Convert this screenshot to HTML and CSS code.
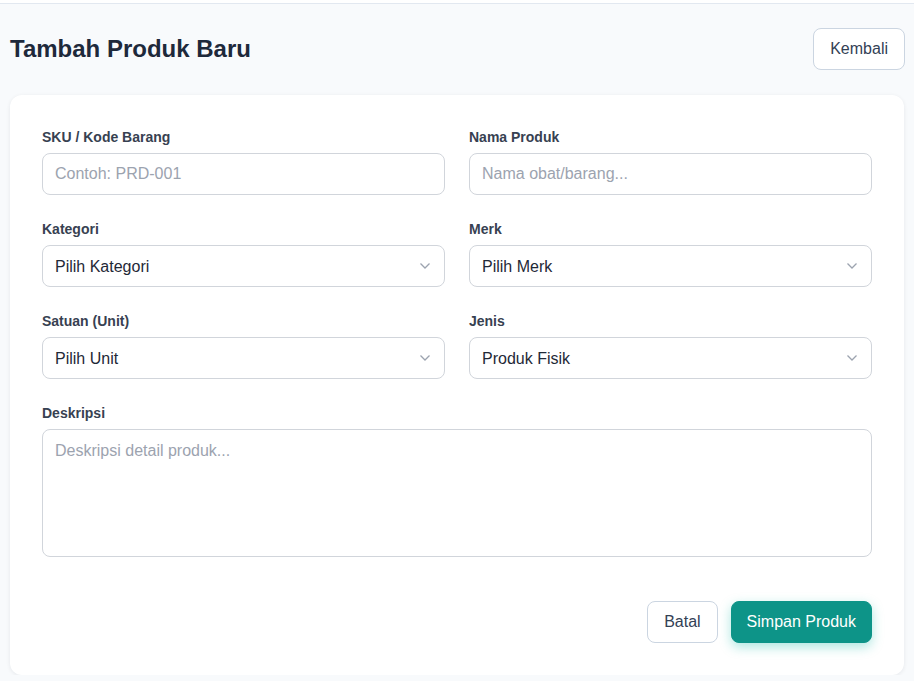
FILE: index.html
```html
<!doctype html>
<html lang="id">
  <head>
    <meta charset="UTF-8" />
    <meta name="viewport" content="width=device-width, initial-scale=1.0" />
    <title>Tambah Produk Baru</title>
    <link rel="stylesheet" href="styles.css">
  </head>
  <body>
    <div class="topbar"></div>

    <main class="page">
      <div class="page-header">
        <h1 class="page-title">Tambah Produk Baru</h1>
        <button type="button" class="btn btn-outline btn-back">Kembali</button>
      </div>

      <form class="card" onsubmit="return false;">
        <div class="form-grid">
          <div class="field">
            <label for="sku">SKU / Kode Barang</label>
            <input type="text" id="sku" class="control" placeholder="Contoh: PRD-001" />
          </div>
          <div class="field">
            <label for="nama">Nama Produk</label>
            <input type="text" id="nama" class="control" placeholder="Nama obat/barang..." />
          </div>

          <div class="field">
            <label for="kategori">Kategori</label>
            <div class="select-wrap">
              <select id="kategori" class="control">
                <option>Pilih Kategori</option>
              </select>
              <svg class="chevron" viewBox="0 0 12 8" width="12" height="8"><path d="M1.5 1.5 6 6l4.5-4.5" /></svg>
            </div>
          </div>
          <div class="field">
            <label for="merk">Merk</label>
            <div class="select-wrap">
              <select id="merk" class="control">
                <option>Pilih Merk</option>
              </select>
              <svg class="chevron" viewBox="0 0 12 8" width="12" height="8"><path d="M1.5 1.5 6 6l4.5-4.5" /></svg>
            </div>
          </div>

          <div class="field">
            <label for="satuan">Satuan (Unit)</label>
            <div class="select-wrap">
              <select id="satuan" class="control">
                <option>Pilih Unit</option>
              </select>
              <svg class="chevron" viewBox="0 0 12 8" width="12" height="8"><path d="M1.5 1.5 6 6l4.5-4.5" /></svg>
            </div>
          </div>
          <div class="field">
            <label for="jenis">Jenis</label>
            <div class="select-wrap">
              <select id="jenis" class="control">
                <option>Produk Fisik</option>
                <option>Jasa</option>
              </select>
              <svg class="chevron" viewBox="0 0 12 8" width="12" height="8"><path d="M1.5 1.5 6 6l4.5-4.5" /></svg>
            </div>
          </div>

          <div class="field field-full">
            <label for="deskripsi">Deskripsi</label>
            <textarea id="deskripsi" class="control textarea" placeholder="Deskripsi detail produk..."></textarea>
          </div>
        </div>

        <div class="form-actions">
          <button type="button" class="btn btn-outline">Batal</button>
          <button type="submit" class="btn btn-primary">Simpan Produk</button>
        </div>
      </form>
    </main>
  </body>
</html>
```

FILE: styles.css
```css
* {
  box-sizing: border-box;
}

body {
  margin: 0;
  font-family: "Liberation Sans", Arial, sans-serif;
  background-color: #f8fafc;
  color: #1f2937;
}

.topbar {
  height: 4px;
  background-color: #fff;
  border-bottom: 1px solid #e2e8f0;
}

.page {
  padding: 0 10px;
}

.page-header {
  display: flex;
  justify-content: space-between;
  align-items: center;
  padding: 24px 0 25px;
}

.page-title {
  margin: 0;
  font-size: 24px;
  font-weight: 700;
  color: #1e293b;
}

.btn {
  height: 42px;
  padding: 0 16px;
  font-family: inherit;
  font-size: 16px;
  border-radius: 8px;
  cursor: pointer;
}

.btn-back {
  margin-right: -1px;
}

.btn-outline {
  background-color: #fff;
  border: 1px solid #cbd5e1;
  color: #334155;
}

.btn-primary {
  padding: 0 15px;
  background-color: #0d9488;
  border: 1px solid #0d9488;
  color: #fff;
  box-shadow: 0 4px 12px rgba(20, 184, 166, 0.35);
}

.card {
  background-color: #fff;
  border-radius: 12px;
  box-shadow: 0 1px 4px rgba(15, 23, 42, 0.08);
  padding: 32px;
}

.form-grid {
  display: grid;
  grid-template-columns: 1fr 1fr;
  column-gap: 24px;
  row-gap: 24px;
}

.field {
  display: flex;
  flex-direction: column;
}

.field-full {
  grid-column: 1 / -1;
}

.field label {
  font-size: 14px;
  line-height: 20px;
  font-weight: 700;
  color: #374151;
  margin-bottom: 6px;
}

.control {
  width: 100%;
  height: 42px;
  padding: 0 12px;
  font-family: inherit;
  font-size: 16px;
  color: #1f2937;
  background-color: #fff;
  border: 1px solid #d1d5db;
  border-radius: 8px;
  outline: none;
}

.control::placeholder {
  color: #9ca3af;
}

select.control {
  appearance: none;
  -webkit-appearance: none;
  padding-right: 36px;
}

.select-wrap {
  position: relative;
}

.chevron {
  position: absolute;
  right: 14px;
  top: 17px;
  fill: none;
  stroke: #9ca3af;
  stroke-width: 1.3;
  pointer-events: none;
}

.textarea {
  height: 128px;
  padding: 11px 12px;
  line-height: 20px;
  resize: none;
}

.form-actions {
  display: flex;
  justify-content: flex-end;
  gap: 13px;
  margin-top: 44px;
}
```
